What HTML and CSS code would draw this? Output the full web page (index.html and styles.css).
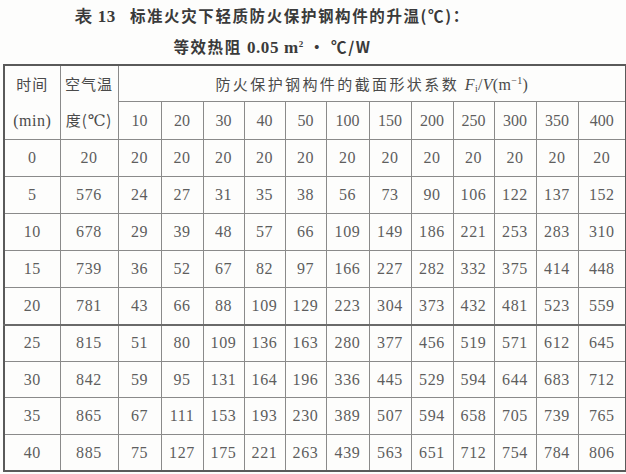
FILE: index.html
```html
<!DOCTYPE html>
<html lang="en">
<head>
<meta charset="utf-8">
<link rel="stylesheet" href="styles.css">
</head>
<body>
<div class="page">
  <div class="title">
    <div class="title-line"><span class="lat">表 13</span><span class="gap"></span>标准火灾下轻质防火保护钢构件的升温(℃)：</div>
    <div class="title-line">等效热阻 <span class="lat">0.05 m<sup>2</sup></span> · ℃/W</div>
  </div>
  <table class="data">
    <colgroup>
      <col class="c-time"><col class="c-air">
      <col class="c-n1"><col class="c-n2"><col class="c-n3"><col class="c-n3"><col class="c-n3">
      <col class="c-n1"><col class="c-n2"><col class="c-n2"><col class="c-n3"><col class="c-n2"><col class="c-n2"><col class="c-last">
    </colgroup>
    <thead>
      <tr class="h1">
        <th rowspan="2" class="hcell">时间<br><span class="min">(min)</span></th>
        <th rowspan="2" class="hcell">空气温<br>度(<span class="deg">℃</span>)</th>
        <th colspan="12" class="span-head">防火保护钢构件的截面形状系数 <span class="fv"><i>F</i><sub>i</sub>/<i>V</i>(m<sup>−1</sup>)</span></th>
      </tr>
      <tr class="h2">
        <th>10</th><th>20</th><th>30</th><th>40</th><th>50</th><th>100</th><th>150</th><th>200</th><th>250</th><th>300</th><th>350</th><th>400</th>
      </tr>
    </thead>
    <tbody>
      <tr><td>0</td><td>20</td><td>20</td><td>20</td><td>20</td><td>20</td><td>20</td><td>20</td><td>20</td><td>20</td><td>20</td><td>20</td><td>20</td><td>20</td></tr>
      <tr><td>5</td><td>576</td><td>24</td><td>27</td><td>31</td><td>35</td><td>38</td><td>56</td><td>73</td><td>90</td><td>106</td><td>122</td><td>137</td><td>152</td></tr>
      <tr><td>10</td><td>678</td><td>29</td><td>39</td><td>48</td><td>57</td><td>66</td><td>109</td><td>149</td><td>186</td><td>221</td><td>253</td><td>283</td><td>310</td></tr>
      <tr><td>15</td><td>739</td><td>36</td><td>52</td><td>67</td><td>82</td><td>97</td><td>166</td><td>227</td><td>282</td><td>332</td><td>375</td><td>414</td><td>448</td></tr>
      <tr><td>20</td><td>781</td><td>43</td><td>66</td><td>88</td><td>109</td><td>129</td><td>223</td><td>304</td><td>373</td><td>432</td><td>481</td><td>523</td><td>559</td></tr>
      <tr class="group"><td>25</td><td>815</td><td>51</td><td>80</td><td>109</td><td>136</td><td>163</td><td>280</td><td>377</td><td>456</td><td>519</td><td>571</td><td>612</td><td>645</td></tr>
      <tr class="low"><td>30</td><td>842</td><td>59</td><td>95</td><td>131</td><td>164</td><td>196</td><td>336</td><td>445</td><td>529</td><td>594</td><td>644</td><td>683</td><td>712</td></tr>
      <tr class="low"><td>35</td><td>865</td><td>67</td><td>111</td><td>153</td><td>193</td><td>230</td><td>389</td><td>507</td><td>594</td><td>658</td><td>705</td><td>739</td><td>765</td></tr>
      <tr class="low"><td>40</td><td>885</td><td>75</td><td>127</td><td>175</td><td>221</td><td>263</td><td>439</td><td>563</td><td>651</td><td>712</td><td>754</td><td>784</td><td>806</td></tr>
    </tbody>
  </table>
</div>
</body>
</html>
```
FILE: styles.css
```css
html, body {
  margin: 0;
  padding: 0;
  background: #fdfdfc;
}

.page {
  width: 626px;
  height: 474px;
  overflow: hidden;
  padding-left: 3px;
  box-sizing: border-box;
  color: #4a4a4a;
  font-family: "Liberation Serif", "DejaVu Serif", "Times New Roman", Times, serif;
}

.title {
  padding-right: 84px;
  padding-top: 3px;
  height: 64px;
  box-sizing: border-box;
  text-align: center;
  font-family: "Noto Sans CJK SC", sans-serif;
  font-weight: 700;
  font-size: 15.5px;
  letter-spacing: 1.6px;
  color: #3a3a3a;
}

.title-line {
  height: 31px;
  line-height: 24px;
}

.title .lat {
  font-family: "Liberation Serif", "DejaVu Serif", "Times New Roman", serif;
  font-size: 17px;
  letter-spacing: 0.6px;
}

.title sup {
  font-size: 9px;
  vertical-align: 6px;
  line-height: 0;
}

.title .gap {
  display: inline-block;
  width: 14px;
}

.data {
  border-collapse: collapse;
  table-layout: fixed;
  width: 622px;
  border: 2px solid #5a5a5a;
  font-family: "Liberation Serif", "DejaVu Serif", "Times New Roman", Times, serif;
  font-size: 16px;
  color: #5e5e5e;
}

.c-time { width: 56px; }
.c-air { width: 58px; }
.c-n1 { width: 43px; }
.c-n2 { width: 42px; }
.c-n3 { width: 41px; }
.c-last { width: 48px; }

.data th,
.data td {
  border: 1px solid #8a8a8a;
  padding: 0;
  text-align: center;
  font-weight: normal;
  white-space: nowrap;
  font-family: "Liberation Serif", "DejaVu Serif", "Times New Roman", Times, serif;
}

.data thead th {
  border-top: 2px solid #5a5a5a;
}

.h1 { height: 35px; }
.h2 { height: 36px; }

.data .h2 th {
  border-top: 1px solid #8a8a8a;
}

.data .hcell {
  font-family: "Noto Sans CJK SC", sans-serif;
  font-size: 15px;
  letter-spacing: 1px;
  line-height: 36px;
  color: #4a4a4a;
}

.hcell .min,
.hcell .deg {
  font-family: "Liberation Serif", "DejaVu Serif", "Times New Roman", serif;
  font-size: 16px;
  letter-spacing: 0.5px;
}

.data .span-head {
  font-family: "Noto Sans CJK SC", sans-serif;
  font-size: 15px;
  letter-spacing: 2.4px;
  color: #4a4a4a;
}

.fv {
  font-family: "Liberation Serif", "DejaVu Serif", "Times New Roman", serif;
  font-size: 16px;
  letter-spacing: 0.3px;
}

.fv sub {
  font-size: 10px;
  vertical-align: -2px;
  line-height: 0;
}

.fv sup {
  font-size: 10px;
  vertical-align: 6px;
  line-height: 0;
}

tbody tr { height: 37px; }
tbody tr.group td { border-top: 2px solid #6a6a6a; }
tbody tr.group, tbody tr.low { height: 36.7px; }

tbody td {
  border-top: none;
  border-bottom: none;
  letter-spacing: 0.6px;
}

tbody tr:first-child td { border-top: 1px solid #8a8a8a; }
tbody tr:last-child td { border-bottom: 2px solid #5a5a5a; }
```
